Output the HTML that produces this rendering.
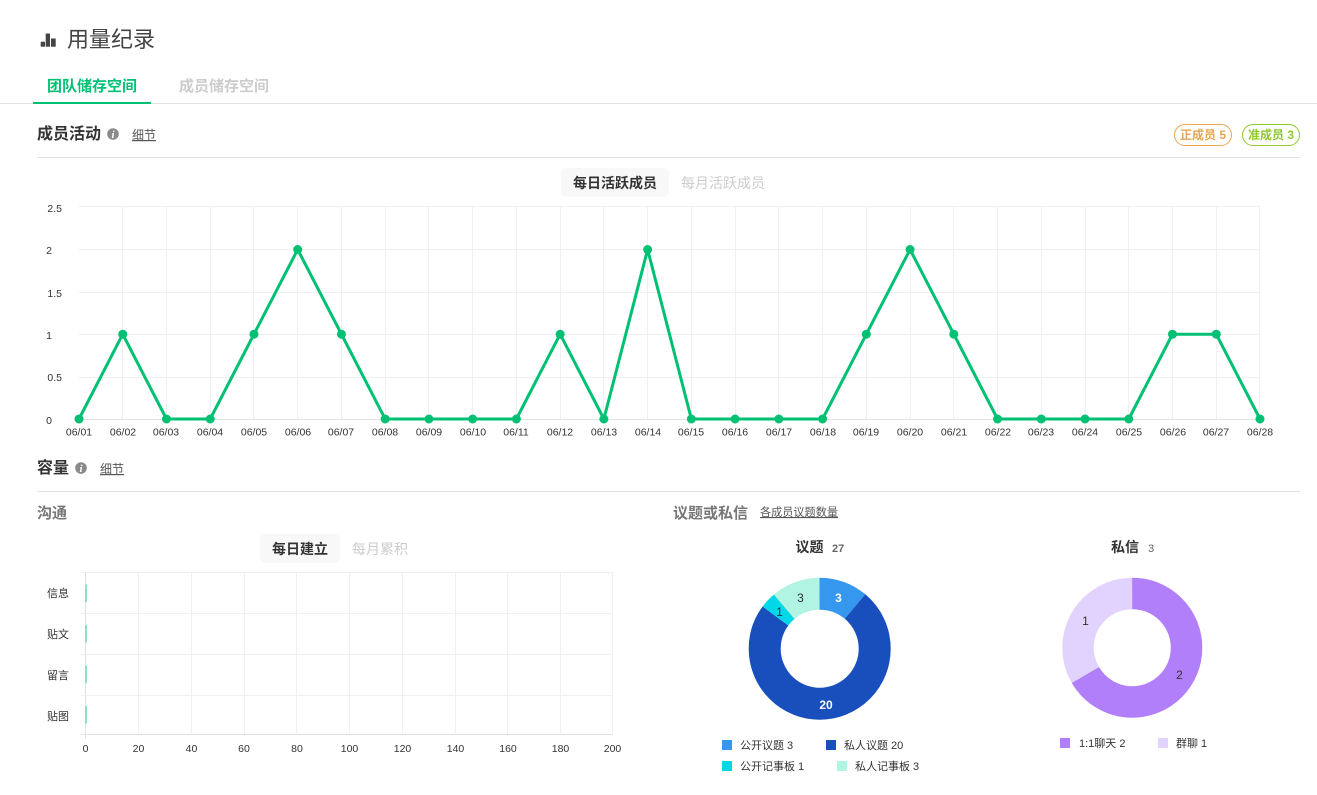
<!DOCTYPE html>
<html lang="zh-CN">
<head>
<meta charset="utf-8">
<title>用量纪录</title>
<style>
html,body{margin:0;padding:0;background:#fff;width:1317px;height:795px;overflow:hidden}
svg{display:block;font-family:"Liberation Sans","Noto Sans CJK SC",sans-serif}
.t{font-size:11px;fill:#333}
.s{font-size:10.5px;fill:#333}
.m{text-anchor:middle}
.e{text-anchor:end}
.b{font-weight:700}
</style>
</head>
<body>
<svg width="1317" height="795" viewBox="0 0 1317 795" xmlns="http://www.w3.org/2000/svg">
<!-- header -->
<g fill="#444">
<rect x="40.7" y="41.7" width="4.3" height="5"/>
<rect x="45.7" y="33.5" width="4.3" height="13.2"/>
<rect x="51" y="38.5" width="4.7" height="8.2"/>
</g>
<text x="67" y="47" font-size="22" fill="#444">用量纪录</text>
<text x="47" y="91" font-size="15" font-weight="700" fill="#00c073">团队储存空间</text>
<text x="179" y="91" font-size="15" font-weight="700" fill="#ccc">成员储存空间</text>
<rect x="0" y="103" width="1317" height="1" fill="#e2e2e2"/>
<rect x="33" y="102" width="118" height="2" fill="#00c073"/>

<!-- section 1 -->
<text x="37" y="139" font-size="16" font-weight="700" fill="#333">成员活动</text>
<circle cx="113" cy="134" r="5.8" fill="#8a8a8a"/>
<text x="113" y="138" font-size="11" font-weight="700" fill="#fff" text-anchor="middle" font-style="italic" font-family="Liberation Serif">i</text>
<text x="132" y="139" font-size="12" fill="#555" text-decoration="underline">细节</text>
<rect x="1174.5" y="124.5" width="57" height="21" rx="10.5" fill="#fff" stroke="#e9a54f"/>
<text x="1180" y="139" font-size="12" font-weight="700" fill="#e9a54f">正成员 5</text>
<rect x="1242.5" y="124.5" width="57" height="21" rx="10.5" fill="#fff" stroke="#8fc92c"/>
<text x="1248" y="139" font-size="12" font-weight="700" fill="#8fc92c">准成员 3</text>
<rect x="37" y="157" width="1263" height="1" fill="#e2e2e2"/>

<rect x="561" y="168" width="108" height="29" rx="6" fill="#f8f8f8"/>
<text x="573" y="188" font-size="14" font-weight="700" fill="#333">每日活跃成员</text>
<text x="681" y="188" font-size="14" fill="#ccc">每月活跃成员</text>

<!-- line chart grid -->
<g stroke="#f0f0f0" stroke-width="1" fill="none">
<path d="M79 206.5H1260M79 249.5H1260M79 292.5H1260M79 334.5H1260M79 377.5H1260"/>
<path d="M122.5 207V419M166.5 207V419M210.5 207V419M253.5 207V419M297.5 207V419M341.5 207V419M385.5 207V419M428.5 207V419M472.5 207V419M516.5 207V419M560.5 207V419M603.5 207V419M647.5 207V419M691.5 207V419M735.5 207V419M778.5 207V419M822.5 207V419M866.5 207V419M910.5 207V419M953.5 207V419M997.5 207V419M1041.5 207V419M1085.5 207V419M1128.5 207V419M1172.5 207V419M1216.5 207V419M1259.5 207V419"/>
</g>
<path d="M79 419.5H1260" stroke="#e2e2e2" fill="none"/>
<polyline fill="none" stroke="#00c073" stroke-width="3" stroke-linejoin="round" points="79,419 122.74,334.2 166.48,419 210.22,419 253.96,334.2 297.7,249.5 341.44,334.2 385.18,419 428.92,419 472.66,419 516.4,419 560.14,334.2 603.88,419 647.62,249.5 691.36,419 735.1,419 778.84,419 822.58,419 866.32,334.2 910.06,249.5 953.8,334.2 997.54,419 1041.28,419 1085.02,419 1128.76,419 1172.5,334.2 1216.24,334.2 1260,419"/>
<g fill="#00c073">
<circle cx="79" cy="419" r="4.5"/><circle cx="122.74" cy="334.2" r="4.5"/><circle cx="166.48" cy="419" r="4.5"/><circle cx="210.22" cy="419" r="4.5"/><circle cx="253.96" cy="334.2" r="4.5"/><circle cx="297.7" cy="249.5" r="4.5"/><circle cx="341.44" cy="334.2" r="4.5"/><circle cx="385.18" cy="419" r="4.5"/><circle cx="428.92" cy="419" r="4.5"/><circle cx="472.66" cy="419" r="4.5"/><circle cx="516.4" cy="419" r="4.5"/><circle cx="560.14" cy="334.2" r="4.5"/><circle cx="603.88" cy="419" r="4.5"/><circle cx="647.62" cy="249.5" r="4.5"/><circle cx="691.36" cy="419" r="4.5"/><circle cx="735.1" cy="419" r="4.5"/><circle cx="778.84" cy="419" r="4.5"/><circle cx="822.58" cy="419" r="4.5"/><circle cx="866.32" cy="334.2" r="4.5"/><circle cx="910.06" cy="249.5" r="4.5"/><circle cx="953.8" cy="334.2" r="4.5"/><circle cx="997.54" cy="419" r="4.5"/><circle cx="1041.28" cy="419" r="4.5"/><circle cx="1085.02" cy="419" r="4.5"/><circle cx="1128.76" cy="419" r="4.5"/><circle cx="1172.5" cy="334.2" r="4.5"/><circle cx="1216.24" cy="334.2" r="4.5"/><circle cx="1260" cy="419" r="4.5"/>
</g>
<g class="s e">
<text x="62" y="212">2.5</text><text x="52" y="254">2</text><text x="62" y="297">1.5</text><text x="52" y="339">1</text><text x="62" y="381">0.5</text><text x="52" y="424">0</text>
</g>
<g class="s m">
<text x="79" y="435.5">06/01</text><text x="123" y="435.5">06/02</text><text x="166" y="435.5">06/03</text><text x="210" y="435.5">06/04</text><text x="254" y="435.5">06/05</text><text x="298" y="435.5">06/06</text><text x="341" y="435.5">06/07</text><text x="385" y="435.5">06/08</text><text x="429" y="435.5">06/09</text><text x="473" y="435.5">06/10</text><text x="516" y="435.5">06/11</text><text x="560" y="435.5">06/12</text><text x="604" y="435.5">06/13</text><text x="648" y="435.5">06/14</text><text x="691" y="435.5">06/15</text><text x="735" y="435.5">06/16</text><text x="779" y="435.5">06/17</text><text x="823" y="435.5">06/18</text><text x="866" y="435.5">06/19</text><text x="910" y="435.5">06/20</text><text x="954" y="435.5">06/21</text><text x="998" y="435.5">06/22</text><text x="1041" y="435.5">06/23</text><text x="1085" y="435.5">06/24</text><text x="1129" y="435.5">06/25</text><text x="1173" y="435.5">06/26</text><text x="1216" y="435.5">06/27</text><text x="1260" y="435.5">06/28</text>
</g>

<!-- section 2 -->
<text x="37" y="473" font-size="16" font-weight="700" fill="#333">容量</text>
<circle cx="81" cy="468" r="5.8" fill="#8a8a8a"/>
<text x="81" y="472" font-size="11" font-weight="700" fill="#fff" text-anchor="middle" font-style="italic" font-family="Liberation Serif">i</text>
<text x="100" y="473" font-size="12" fill="#555" text-decoration="underline">细节</text>
<rect x="37" y="491" width="1263" height="1" fill="#e2e2e2"/>

<text x="37" y="518" font-size="15" font-weight="700" fill="#777">沟通</text>
<text x="673" y="518" font-size="15" font-weight="700" fill="#777">议题或私信</text>
<text x="760" y="516" font-size="11.15" fill="#555" text-decoration="underline">各成员议题数量</text>

<rect x="260" y="534" width="80" height="29" rx="6" fill="#f8f8f8"/>
<text x="272" y="554" font-size="14" font-weight="700" fill="#333">每日建立</text>
<text x="352" y="554" font-size="14" fill="#ccc">每月累积</text>

<!-- bar chart -->
<g stroke="#f0f0f0" fill="none">
<path d="M81 572.5H612M81 613.5H612M81 654.5H612M81 695.5H612"/>
<path d="M138.5 572V735M191.5 572V735M244.5 572V735M296.5 572V735M349.5 572V735M402.5 572V735M455.5 572V735M507.5 572V735M560.5 572V735M612.5 572V735"/>
</g>
<path d="M85.5 572V739M81 734.5H612" stroke="#e2e2e2" fill="none"/>
<g fill="#8fdfc0">
<rect x="85" y="584.5" width="2" height="17.5"/>
<rect x="85" y="625" width="2" height="17.5"/>
<rect x="85" y="665.5" width="2" height="17.5"/>
<rect x="85" y="706" width="2" height="17.5"/>
</g>
<g class="t e">
<text x="69" y="597">信息</text><text x="69" y="638">贴文</text><text x="69" y="679">留言</text><text x="69" y="720">贴图</text>
</g>
<g class="s m">
<text x="85.5" y="752">0</text><text x="138.5" y="752">20</text><text x="191.5" y="752">40</text><text x="244" y="752">60</text><text x="297" y="752">80</text><text x="349.5" y="752">100</text><text x="402.5" y="752">120</text><text x="455.5" y="752">140</text><text x="508" y="752">160</text><text x="560.5" y="752">180</text><text x="612.5" y="752">200</text>
</g>

<!-- donut 1 -->
<text x="795.5" y="552" font-size="14" font-weight="700" fill="#333">议题</text>
<text x="832" y="552" font-size="11" font-weight="700" fill="#666">27</text>
<g fill="none" stroke-width="32" transform="rotate(-90 819.7 648.7)">
<circle cx="819.7" cy="648.7" r="55" stroke="#3598ee" pathLength="27" stroke-dasharray="3 24"/>
<circle cx="819.7" cy="648.7" r="55" stroke="#194fbd" pathLength="27" stroke-dasharray="20 7" stroke-dashoffset="-3"/>
<circle cx="819.7" cy="648.7" r="55" stroke="#00d8e8" pathLength="27" stroke-dasharray="1 26" stroke-dashoffset="-23"/>
<circle cx="819.7" cy="648.7" r="55" stroke="#b2f4e4" pathLength="27" stroke-dasharray="3 24" stroke-dashoffset="-24"/>
</g>
<g font-size="12" text-anchor="middle">
<text x="838.5" y="602" fill="#fff" font-weight="700">3</text>
<text x="826" y="709" fill="#fff" font-weight="700">20</text>
<text x="779.5" y="616" fill="#333">1</text>
<text x="800.5" y="602" fill="#333">3</text>
</g>
<rect x="722" y="740" width="10" height="10" fill="#3598ee"/>
<text x="740" y="749" class="t">公开议题 3</text>
<rect x="826" y="740" width="10" height="10" fill="#194fbd"/>
<text x="844" y="749" class="t">私人议题 20</text>
<rect x="722" y="761" width="10" height="10" fill="#00d8e8"/>
<text x="740" y="770" class="t">公开记事板 1</text>
<rect x="837" y="761" width="10" height="10" fill="#b2f4e4"/>
<text x="855" y="770" class="t">私人记事板 3</text>

<!-- donut 2 -->
<text x="1111" y="552" font-size="14" font-weight="700" fill="#333">私信</text>
<text x="1148" y="552" font-size="11" fill="#666">3</text>
<g fill="none" stroke-width="31.5" transform="rotate(-90 1132.3 647.7)">
<circle cx="1132.3" cy="647.7" r="54.25" stroke="#b17ffa" pathLength="3" stroke-dasharray="2 1"/>
<circle cx="1132.3" cy="647.7" r="54.25" stroke="#e2d3fe" pathLength="3" stroke-dasharray="1 2" stroke-dashoffset="-2"/>
</g>
<g font-size="12" text-anchor="middle" fill="#333">
<text x="1085.5" y="625">1</text>
<text x="1179.5" y="679">2</text>
</g>
<rect x="1060" y="738" width="10" height="10" fill="#b17ffa"/>
<text x="1079" y="747" class="t">1:1聊天 2</text>
<rect x="1158" y="738" width="10" height="10" fill="#e2d3fe"/>
<text x="1176" y="747" class="t">群聊 1</text>
</svg>
</body>
</html>
